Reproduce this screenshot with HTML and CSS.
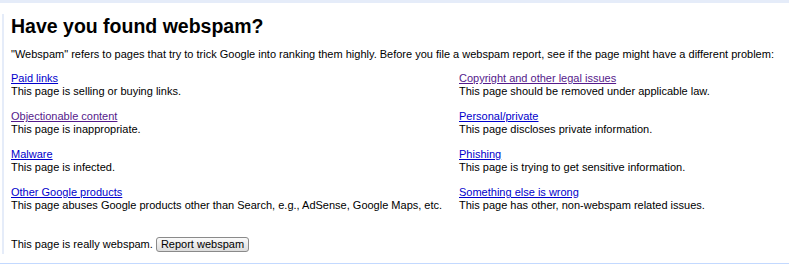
FILE: index.html
```html
<!DOCTYPE html>
<html lang="en">
<head>
  <meta charset="UTF-8">
  <title>Have you found webspam?</title>
  <link rel="stylesheet" href="styles.css">
</head>
<body>
  <div class="topbar"></div>

  <div class="page">
    <h1>Have you found webspam?</h1>
    <p class="intro">"Webspam" refers to pages that try to trick Google into ranking them highly. Before you file a webspam report, see if the page might have a different problem:</p>

    <div class="options">
      <div class="option">
        <a href="#">Paid links</a>
        <div>This page is selling or buying links.</div>
      </div>
      <div class="option">
        <a href="#" class="visited">Copyright and other legal issues</a>
        <div>This page should be removed under applicable law.</div>
      </div>
      <div class="option">
        <a href="#" class="visited">Objectionable content</a>
        <div>This page is inappropriate.</div>
      </div>
      <div class="option">
        <a href="#">Personal/private</a>
        <div>This page discloses private information.</div>
      </div>
      <div class="option">
        <a href="#">Malware</a>
        <div>This page is infected.</div>
      </div>
      <div class="option">
        <a href="#">Phishing</a>
        <div>This page is trying to get sensitive information.</div>
      </div>
      <div class="option">
        <a href="#">Other Google products</a>
        <div>This page abuses Google products other than Search, e.g., AdSense, Google Maps, etc.</div>
      </div>
      <div class="option">
        <a href="#">Something else is wrong</a>
        <div>This page has other, non-webspam related issues.</div>
      </div>
    </div>

    <div class="report">This page is really webspam. <button class="report-button">Report webspam</button></div>
  </div>

  <div class="footline"></div>
</body>
</html>
```

FILE: styles.css
```css
body {
  margin: 0;
  font-family: "Liberation Sans", Arial, sans-serif;
  font-size: 11px;
  line-height: 13px;
  color: #000;
  background-color: #fff;
}

.topbar {
  width: 789px;
  height: 3px;
  background-color: #e5ecf9;
}

.page {
  margin: 11px 0 0 2px;
  padding: 1px 0 2px 7px;
  border-left: 2px solid #e5ecf9;
}

h1 {
  margin: 0;
  font-size: 19.5px;
  line-height: 22px;
  font-weight: bold;
}

.intro {
  margin: 11px 0 0 0;
}

.options {
  display: grid;
  grid-template-columns: 448px 1fr;
  row-gap: 12px;
  margin-top: 11px;
}

.option a {
  color: #0000cc;
}

.option a.visited {
  color: #551a8b;
}

.report {
  margin-top: 25px;
}

.report-button {
  font-family: "Liberation Sans", Arial, sans-serif;
  font-size: 11px;
  line-height: 13px;
  color: #000;
  padding: 0 4px;
  margin: 0;
  border: 1px solid #8a8a8a;
  border-radius: 3px;
  background: linear-gradient(#fafafa, #dcdcdc);
}

.footline {
  width: 789px;
  height: 1px;
  margin-top: 9px;
  background-color: #c3d9ff;
}
```
